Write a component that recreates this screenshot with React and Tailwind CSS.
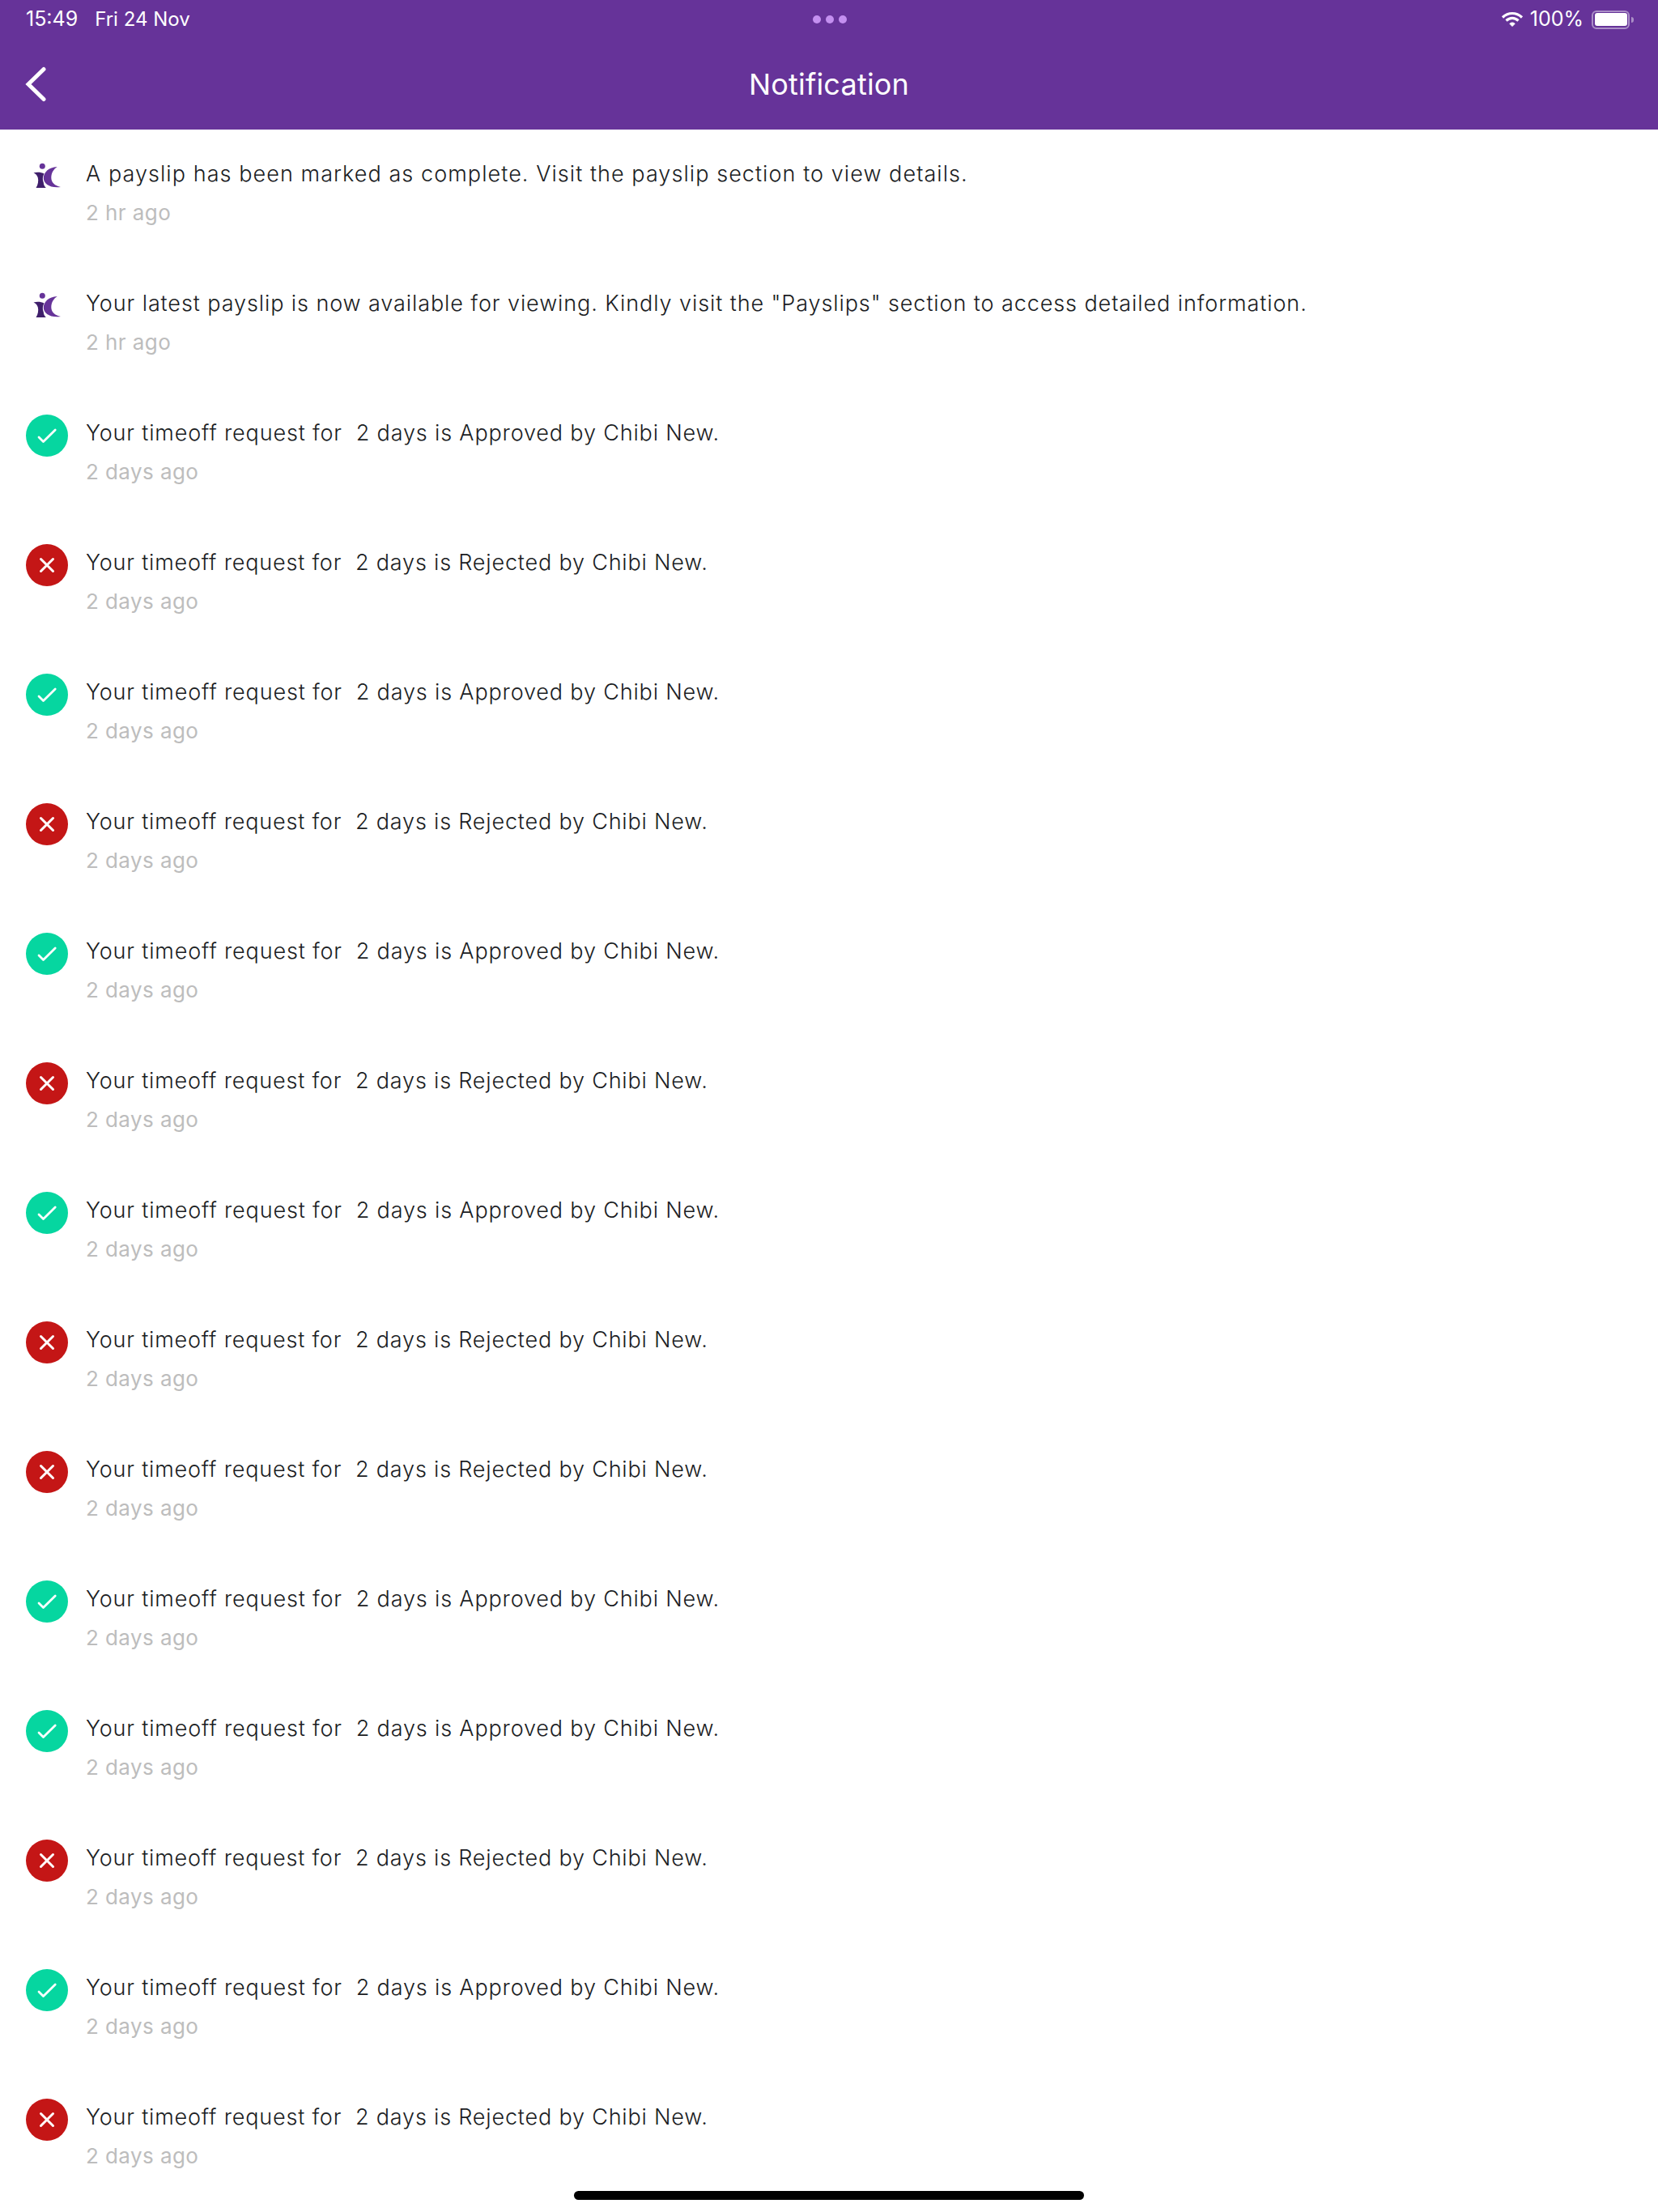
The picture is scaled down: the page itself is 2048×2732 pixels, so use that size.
const A = "Your timeoff request for\u00a0 2 days is Approved by Chibi New.";
const R = "Your timeoff request for\u00a0 2 days is Rejected by Chibi New.";
const rows = [
  { k: "logo", t: "A payslip has been marked as complete. Visit the payslip section to view details.", d: "2 hr ago", c: "tracking-[1.06px]" },
  { k: "logo", t: 'Your latest payslip is now available for viewing. Kindly visit the "Payslips" section to access detailed information.', d: "2 hr ago", c: "tracking-[0.91px]" },
  ..."ARARARARRAARAR".split("").map((c) => ({ k: c, t: c === "A" ? A : R, d: "2 days ago", c: c === "A" ? "tracking-[0.84px]" : "tracking-[0.81px]" })),
];

function Logo() {
  return (
    <svg width="34" height="33" viewBox="41 200 34 33" className="mt-[8px] ml-[9px]">
      <circle cx="52.3" cy="205.3" r="3.5" fill="#663399" />
      <path d="M70.7 206C60 206.500 53.800 213 53.800 220C53.800 227 62 232.800 75 231C67.500 229.500 63.300 225 63.300 219.500C63.300 214 66 209 70.700 206Z" fill="#663399" />
      <path d="M41.500 213.500C46 212.300 51 212.800 54.500 214.500C52.500 218 52.300 222 53.800 225.500C53.800 228 54.800 230 56.800 232L44.500 232C47 228.500 47.800 223 46.800 219.500C46 216.500 44 214.700 41.500 213.500Z" fill="#3f1f6b" />
    </svg>
  );
}

function Status({ k }) {
  if (k === "logo") return <Logo />;
  const ok = k === "A";
  return (
    <div className={`w-[52px] h-[52px] rounded-full ${ok ? "bg-[#06d6a0]" : "bg-[#c41616]"}`}>
      <svg width="52" height="52" viewBox="0 0 52 52" fill="none" stroke="#fff" strokeLinecap="round" strokeLinejoin="round">
        {ok ? (
          <path d="M16 28L21.500 33.500L36.200 19" strokeWidth="2.800" />
        ) : (
          <path d="M18.500 18.500L33.500 33.500M33.500 18.500L18.500 33.500" strokeWidth="3" />
        )}
      </svg>
    </div>
  );
}

export default function App() {
  return (
    <div className="relative w-[2048px] h-[2732px] bg-white overflow-hidden font-['Inter',sans-serif]">
      <header className="h-[160px] bg-[#663399] text-white flex flex-col">
        <div className="h-[48px] flex items-center justify-between pl-[32px] pr-[30px] text-[24px]">
          <div className="flex items-center gap-[21px] w-[400px]">
            <span className="text-[25px]">15:49</span>
            <span>Fri 24 Nov</span>
          </div>
          <div className="flex gap-[6px]">
            <span className="w-[10px] h-[10px] rounded-full bg-[#c490f0]" />
            <span className="w-[10px] h-[10px] rounded-full bg-[#c490f0]" />
            <span className="w-[10px] h-[10px] rounded-full bg-[#c490f0]" />
          </div>
          <div className="flex items-center justify-end w-[400px] gap-[8px]">
            <svg width="28" height="20" viewBox="0 0 28 20" fill="none" stroke="#fff" strokeWidth="3.200">
              <path d="M2 7.500C9 .8 19 .8 26 7.500" />
              <path d="M6.500 11.500C11 7.300 17 7.300 21.500 11.500" />
              <path d="M10.800 15.300L14 18.500L17.200 15.300C15.300 13.500 12.700 13.500 10.800 15.300Z" fill="#fff" strokeWidth="1" />
            </svg>
            <span className="text-[25px]">100%</span>
            <div className="flex items-center gap-[2px] ml-[2px]">
              <div className="w-[47px] h-[23px] rounded-[6px] border-2 border-white/45 p-[1.500px]">
                <div className="w-full h-full rounded-[3px] bg-white" />
              </div>
              <div className="w-[3px] h-[7px] rounded-r-full bg-white/45" />
            </div>
          </div>
        </div>
        <div className="relative flex-1 flex items-center justify-center">
          <svg width="28" height="44" viewBox="0 0 28 44" fill="none" stroke="#fff" strokeWidth="5" strokeLinecap="round" className="absolute left-[30px] top-[34px]">
            <path d="M24 3.500L5 22L24 40.500" />
          </svg>
          <h1 className="text-[36px] font-normal leading-none tracking-[0.2px]">Notification</h1>
        </div>
      </header>
      <main>
        {rows.map((r, i) => (
          <div key={i} className="h-[160px] flex pl-[32px] pt-[32px]">
            <div className="w-[74px] shrink-0">
              <Status k={r.k} />
            </div>
            <div className="flex flex-col">
              <p className={`text-[#1b1d23] text-[27px] font-light leading-[44px] whitespace-pre mt-[1px] ${r.c}`}>{r.t}</p>
              <p className="text-[#bdbdbd] text-[26px] leading-[36px] mt-[8px] tracking-[0.42px]">{r.d}</p>
            </div>
          </div>
        ))}
      </main>
      <div className="absolute left-[709px] top-[2706px] w-[630px] h-[11px] rounded-full bg-black" />
    </div>
  );
}
